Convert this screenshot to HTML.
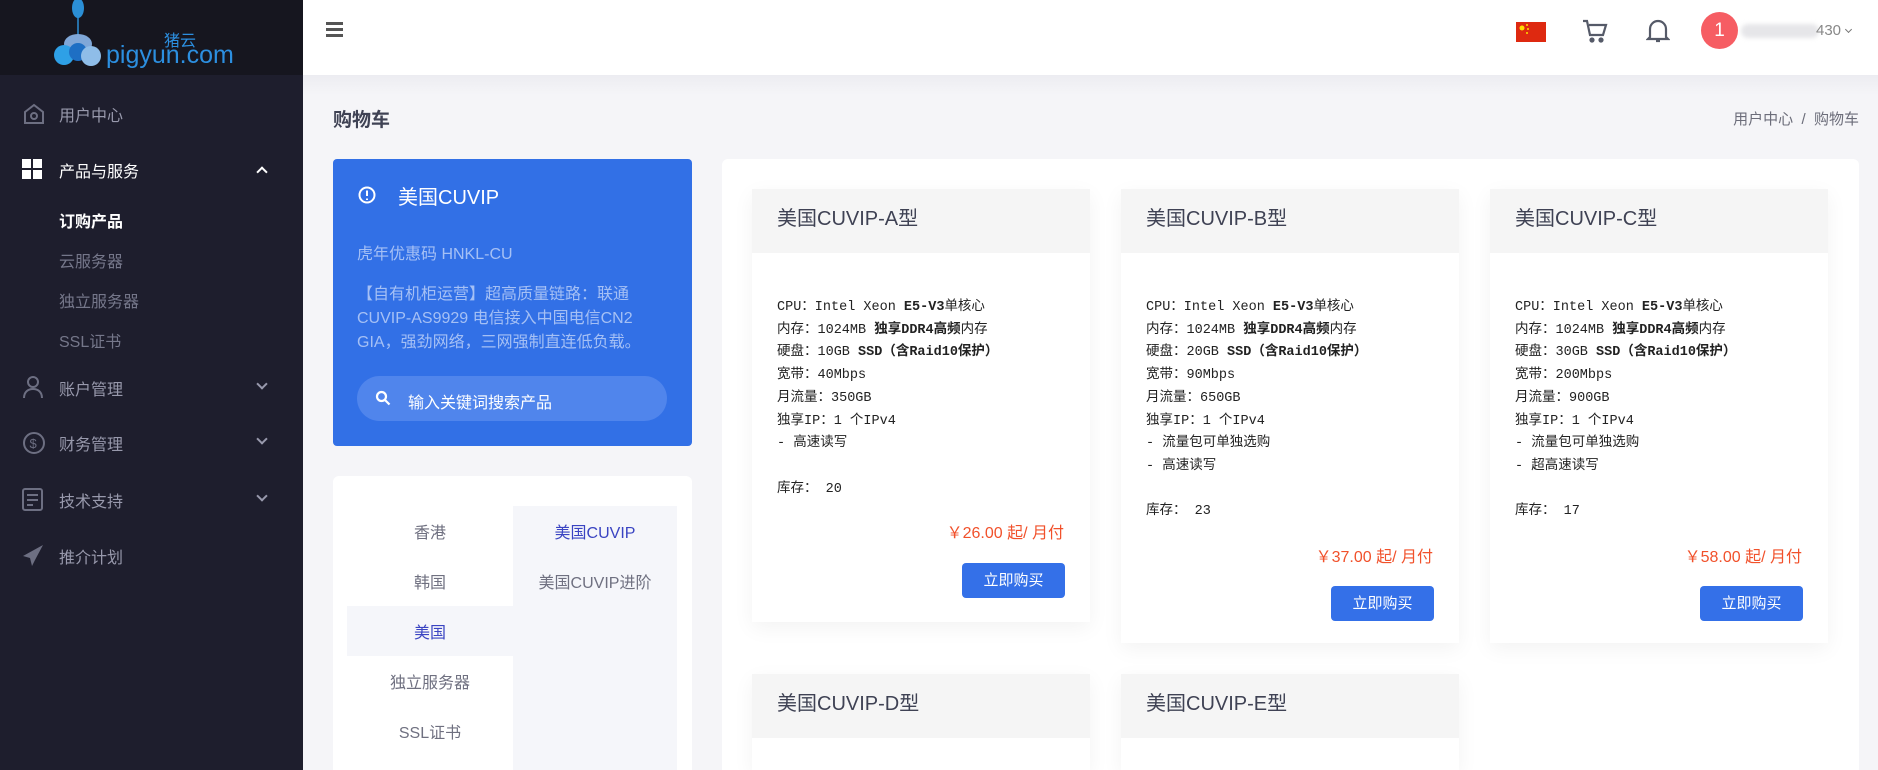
<!DOCTYPE html>
<html style="overflow:hidden;height:770px"><head><meta charset="utf-8"><style>
*{box-sizing:border-box;margin:0;padding:0}
body{width:1878px;height:770px;overflow:hidden;background:#f5f5f8;font-family:"Liberation Sans","Noto Sans CJK SC",sans-serif;position:relative}
.abs{position:absolute}
#side{left:0;top:0;width:303px;height:770px;background:#1e1e2d}
#logo{left:0;top:0;width:303px;height:75px;background:#16161f}
.mi{position:absolute;left:59px;font-size:16px;color:#9899ac;transform:translateY(-50%)}
.mi.w{color:#fff}
.sub{position:absolute;left:59px;font-size:16px;color:#75778a;transform:translateY(-50%)}
.chev{position:absolute;left:258px;width:8px;height:8px;border-right:2px solid #9899ac;border-bottom:2px solid #9899ac;transform:rotate(45deg)}
#top{left:303px;top:0;width:1575px;height:75px;background:#fff}
.card{background:#fff;border-radius:6px}
.pc{position:absolute;background:#fff;box-shadow:0 6px 20px rgba(0,0,0,.05);overflow:hidden}
.ph{height:64px;background:#f5f5f5;font-size:20px;color:#3f4254;padding:13px 0 0 25px}
.spec{font-family:"Liberation Mono","Noto Sans CJK SC",monospace;font-size:13.5px;color:#222;line-height:22.7px;padding:44px 0 0 25px}
.spec b{font-weight:bold}
.price{position:absolute;right:26px;color:#f1512b;font-size:16px}
.btn{position:absolute;right:25px;width:103px;height:35px;background:#3470e8;border-radius:4px;color:#fff;font-size:15px;text-align:center;line-height:35px}
.cat{position:absolute;font-size:16px;color:#6f7080;text-align:center;transform:translateY(-50%)}
</style></head><body>
<div id="side" class="abs"></div>
<div id="logo" class="abs">
<svg width="303" height="75" style="position:absolute;left:0;top:0">
<ellipse cx="78" cy="8" rx="6" ry="10" fill="#2b8fd6"/><line x1="78" y1="14" x2="78" y2="40" stroke="#2b8fd6" stroke-width="1.5"/>
<ellipse cx="78" cy="44" rx="14" ry="10" fill="#7fa7d8"/>
<circle cx="64" cy="55" r="10" fill="#2ea0e6"/><circle cx="78" cy="52" r="9" fill="#1e6fc4"/><circle cx="91" cy="56" r="10" fill="#8fbde8"/>
<text x="106" y="63" font-family="Liberation Sans" font-size="25" fill="#2c8fe0">pigyun.com</text>
<text x="164" y="46" font-family="Noto Sans CJK SC" font-size="16" fill="#2c8fe0">猪云</text>
</svg></div>
<svg class="abs" style="left:22px;top:102px" width="24" height="24" viewBox="0 0 24 24" fill="none" stroke="#6d6f82" stroke-width="2"><path d="M3 10L12 3l9 7v11H3z"/><circle cx="12" cy="14" r="3"/></svg>
<div class="mi" style="top:114px">用户中心</div>
<svg class="abs" style="left:22px;top:159px" width="20" height="20"><rect x="0" y="0" width="9" height="9" fill="#fff"/><rect x="11" y="0" width="9" height="9" fill="#fff"/><rect x="0" y="11" width="9" height="9" fill="#fff"/><rect x="11" y="11" width="9" height="9" fill="#fff"/></svg>
<div class="mi w" style="top:170px">产品与服务</div>
<div class="chev" style="top:168px;transform:rotate(225deg);border-color:#fff"></div>
<div class="sub" style="top:220px;color:#fff;font-weight:bold">订购产品</div>
<div class="sub" style="top:260px">云服务器</div>
<div class="sub" style="top:300px">独立服务器</div>
<div class="sub" style="top:340px">SSL证书</div>
<svg class="abs" style="left:22px;top:375px" width="22" height="24" fill="none" stroke="#6d6f82" stroke-width="2"><circle cx="11" cy="7" r="5"/><path d="M2 23c0-6 4-9 9-9s9 3 9 9"/></svg>
<div class="mi" style="top:388px">账户管理</div><div class="chev" style="top:380px"></div>
<svg class="abs" style="left:22px;top:431px" width="24" height="24" fill="none" stroke="#6d6f82" stroke-width="2"><circle cx="12" cy="12" r="10"/><text x="7.5" y="17" font-size="13" fill="#6d6f82" stroke="none" font-family="Liberation Sans">$</text></svg>
<div class="mi" style="top:443px">财务管理</div><div class="chev" style="top:435px"></div>
<svg class="abs" style="left:22px;top:488px" width="22" height="24" fill="none" stroke="#6d6f82" stroke-width="2"><rect x="1" y="1" width="19" height="21" rx="2"/><path d="M5 7h11M5 12h11M5 17h6"/></svg>
<div class="mi" style="top:500px">技术支持</div><div class="chev" style="top:492px"></div>
<svg class="abs" style="left:22px;top:544px" width="22" height="24"><path d="M21 1L1 12l7 2 2 8 3-6z" fill="#6d6f82"/></svg>
<div class="mi" style="top:556px">推介计划</div>
<div id="top" class="abs"></div>
<div class="abs" style="left:326px;top:22px;width:17px;height:3px;background:#555;box-shadow:0 6px 0 #555,0 12px 0 #555"></div>
<svg class="abs" style="left:1516px;top:22px" width="30" height="20"><rect width="30" height="20" fill="#de2910"/><circle cx="6" cy="6" r="2.5" fill="#ffde00"/><circle cx="11" cy="3" r="1" fill="#ffde00"/><circle cx="12" cy="7" r="1" fill="#ffde00"/><circle cx="11" cy="11" r="1" fill="#ffde00"/></svg>
<svg class="abs" style="left:1582px;top:18px" width="26" height="26" fill="none" stroke="#555a68" stroke-width="2.2"><path d="M1 3h4l3 14h13l3-10H7"/><circle cx="10" cy="22" r="1.5" fill="#555a68"/><circle cx="19" cy="22" r="1.5" fill="#555a68"/></svg>
<svg class="abs" style="left:1646px;top:18px" width="24" height="26" fill="none" stroke="#555a68" stroke-width="2.2"><path d="M4 19V11a8 8 0 0 1 16 0v8l2 2H2z"/><path d="M10 23h4"/></svg>
<div class="abs" style="left:1701px;top:12px;width:37px;height:37px;border-radius:50%;background:#f65d63;color:#fff;font-size:19px;text-align:center;line-height:37px">1</div>
<div class="abs" style="left:1741px;top:24px;width:78px;height:14px;border-radius:7px;background:#e6e6e9;filter:blur(2px)"></div>
<div class="abs" style="left:1816px;top:22px;font-size:15px;color:#888">430</div>
<div class="abs" style="left:1846px;top:27px;width:5px;height:5px;border-right:1.5px solid #777;border-bottom:1.5px solid #777;transform:rotate(45deg)"></div>
<div class="abs" style="left:303px;top:75px;width:1575px;height:20px;background:linear-gradient(#ececf1,#f5f5f8)"></div>
<div class="abs" style="left:333px;top:105px;font-size:19px;font-weight:bold;color:#3f4254">购物车</div>
<div class="abs" style="right:19px;top:108px;font-size:15px;color:#6c6d7a">用户中心 &nbsp;/ &nbsp;购物车</div>
<div class="abs" style="left:333px;top:159px;width:359px;height:287px;background:#3270e6;border-radius:4px"></div>
<svg class="abs" style="left:358px;top:186px" width="18" height="18" fill="none" stroke="#fff" stroke-width="2"><circle cx="9" cy="9" r="7.5"/><path d="M9 4.5v5.5M9 12.5v1.5"/></svg>
<div class="abs" style="left:398px;top:181px;font-size:20px;color:#fff">美国CUVIP</div>
<div class="abs" style="left:357px;top:240px;font-size:16px;color:#a5c0f5">虎年优惠码 HNKL-CU</div>
<div class="abs" style="left:357px;top:283px;font-size:16px;color:#a5c0f5;line-height:24px;width:300px">【自有机柜运营】超高质量链路：联通CUVIP-AS9929 电信接入中国电信CN2 GIA，强劲网络，三网强制直连低负载。</div>
<div class="abs" style="left:357px;top:376px;width:310px;height:45px;border-radius:23px;background:#5085ec"></div>
<svg class="abs" style="left:375px;top:390px" width="16" height="16" fill="none" stroke="#fff" stroke-width="2.2"><circle cx="6.5" cy="6.5" r="4.5"/><path d="M10 10l4.5 4.5"/></svg>
<div class="abs" style="left:408px;top:389px;font-size:16px;color:#fff">输入关键词搜索产品</div>
<div class="abs card" style="left:333px;top:476px;width:359px;height:294px;border-radius:6px 6px 0 0"></div>
<div class="abs" style="left:513px;top:506px;width:164px;height:264px;background:#f5f6fa"></div>
<div class="abs" style="left:347px;top:606px;width:166px;height:50px;background:#f5f6fa"></div>
<div class="cat" style="left:347px;width:166px;top:531px">香港</div>
<div class="cat" style="left:347px;width:166px;top:581px">韩国</div>
<div class="cat" style="left:347px;width:166px;top:631px;color:#3a44c2">美国</div>
<div class="cat" style="left:347px;width:166px;top:681px">独立服务器</div>
<div class="cat" style="left:347px;width:166px;top:731px">SSL证书</div>
<div class="cat" style="left:513px;width:164px;top:531px;color:#3a44c2">美国CUVIP</div>
<div class="cat" style="left:513px;width:164px;top:581px">美国CUVIP进阶</div>
<div class="abs card" style="left:722px;top:159px;width:1137px;height:611px;border-radius:6px 6px 0 0"></div>
<div class="pc" style="left:752px;top:189px;width:338px;height:433px">
<div class="ph">美国CUVIP-A型</div>
<div class="spec">CPU：Intel Xeon <b>E5-V3</b>单核心<br>内存：1024MB <b>独享DDR4高频</b>内存<br>硬盘：10GB <b>SSD（含Raid10保护）</b><br>宽带：40Mbps<br>月流量：350GB<br>独享IP：1 个IPv4<br>- 高速读写<br><br>库存： 20</div>
<div class="price" style="top:330px">￥26.00 起/ 月付</div>
<div class="btn" style="top:374px">立即购买</div></div>
<div class="pc" style="left:1121px;top:189px;width:338px;height:454px">
<div class="ph">美国CUVIP-B型</div>
<div class="spec">CPU：Intel Xeon <b>E5-V3</b>单核心<br>内存：1024MB <b>独享DDR4高频</b>内存<br>硬盘：20GB <b>SSD（含Raid10保护）</b><br>宽带：90Mbps<br>月流量：650GB<br>独享IP：1 个IPv4<br>- 流量包可单独选购<br>- 高速读写<br><br>库存： 23</div>
<div class="price" style="top:354px">￥37.00 起/ 月付</div>
<div class="btn" style="top:397px">立即购买</div></div>
<div class="pc" style="left:1490px;top:189px;width:338px;height:454px">
<div class="ph">美国CUVIP-C型</div>
<div class="spec">CPU：Intel Xeon <b>E5-V3</b>单核心<br>内存：1024MB <b>独享DDR4高频</b>内存<br>硬盘：30GB <b>SSD（含Raid10保护）</b><br>宽带：200Mbps<br>月流量：900GB<br>独享IP：1 个IPv4<br>- 流量包可单独选购<br>- 超高速读写<br><br>库存： 17</div>
<div class="price" style="top:354px">￥58.00 起/ 月付</div>
<div class="btn" style="top:397px">立即购买</div></div>
<div class="pc" style="left:752px;top:674px;width:338px;height:96px"><div class="ph">美国CUVIP-D型</div></div>
<div class="pc" style="left:1121px;top:674px;width:338px;height:96px"><div class="ph">美国CUVIP-E型</div></div>
</body></html>
